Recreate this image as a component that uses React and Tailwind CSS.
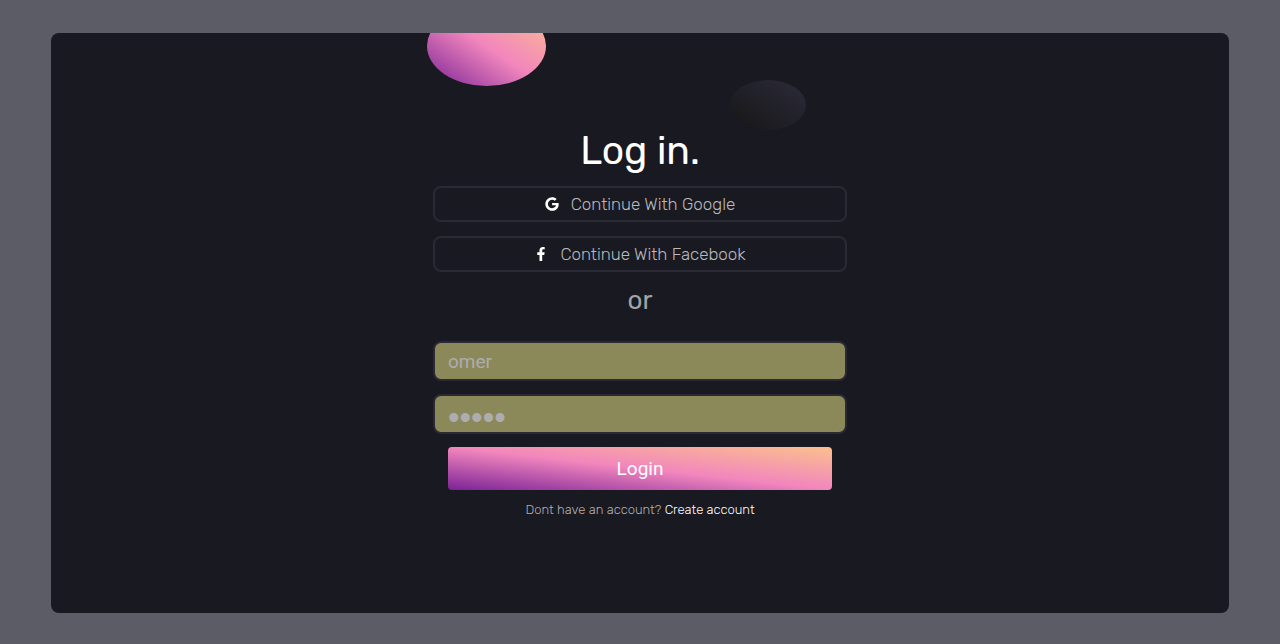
import { FaGoogle, FaFacebookF } from "react-icons/fa";

function SocialButton({ icon, children }) {
  return (
    <button
      type="button"
      className="flex h-9 w-full items-center justify-center gap-3 rounded-lg border-2 border-[#2a2934] text-[17px] leading-5 font-light text-[#bababd]"
    >
      <span className="text-sm text-white">{icon}</span>
      {children}
    </button>
  );
}

function Field({ label, className, ...props }) {
  return (
    <input
      aria-label={label}
      className={`h-10 w-full rounded-lg border-2 border-[#2a2934] bg-[#8b8959] text-[#adadb0] outline-none ${className}`}
      {...props}
    />
  );
}

export default function App() {
  return (
    <div className="flex min-h-screen bg-[#5c5c66] px-[4%] pt-[33px] pb-[31px] font-[Rubik,Roboto,sans-serif]">
      <main className="relative flex w-full flex-col items-center overflow-hidden rounded-lg bg-[#191921] px-4 pt-24">
        <div className="absolute -top-[27px] left-1/2 h-20 w-[119px] -translate-x-[213px] rounded-[50%] bg-[linear-gradient(to_top_right,#7b2397,#f286bd_50%,#fbc08d)]" />
        <div className="absolute top-[47px] left-1/2 h-[50px] w-[76px] translate-x-[90px] rounded-[50%] bg-[linear-gradient(to_top_right,#161617,#2c2b39)]" />
        <div className="relative flex w-full max-w-[414px] flex-col items-center">
          <h1 className="text-[39px] leading-[44px] text-white">Log in.</h1>
          <div className="mt-[13px] flex w-full flex-col gap-3.5">
            <SocialButton icon={<FaGoogle />}>Continue With Google</SocialButton>
            <SocialButton icon={<FaFacebookF />}>Continue With Facebook</SocialButton>
          </div>
          <p className="mt-[13px] text-[26px] leading-8 text-[#a3a3a6]">or</p>
          <form className="mt-6 flex w-full flex-col items-center" onSubmit={(e) => e.preventDefault()}>
            <div className="flex w-full flex-col gap-[13px]">
              <Field
                label="Username"
                type="text"
                defaultValue="omer"
                className="px-[13px] font-[Roboto,sans-serif] text-[19px]"
              />
              <Field
                label="Password"
                type="password"
                defaultValue="admin"
                className="px-[13px] pt-2 font-['Liberation_Sans',sans-serif] text-[33px] leading-7"
              />
            </div>
            <div className="mt-[13px] w-full px-[15px]">
              <button
                type="submit"
                className="h-[43px] w-full rounded bg-[linear-gradient(to_top_right,#7b2397,#f286bd_50%,#fbc08d)] pt-0.5 font-[Roboto,sans-serif] text-[19px] text-white"
              >
                Login
              </button>
            </div>
          </form>
          <p className="mt-2.5 text-[13px] leading-5 font-light text-[#b0b0b3]">
            Dont have an account?{" "}
            <a href="#create" className="text-white">
              Create account
            </a>
          </p>
        </div>
      </main>
    </div>
  );
}
